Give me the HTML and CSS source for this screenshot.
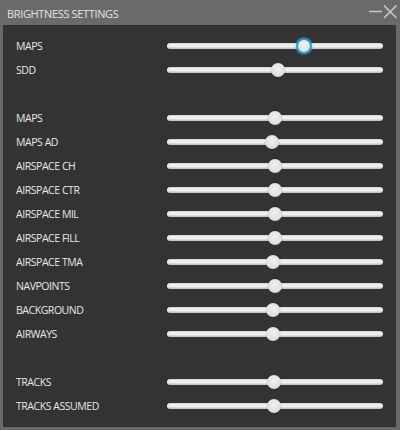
FILE: index.html
```html
<!DOCTYPE html>
<html>
<head>
<meta charset="utf-8">
<link rel="stylesheet" href="styles.css">
</head>
<body>
<div class="window">
  <div class="titlebar">
    <span class="title">BRIGHTNESS SETTINGS</span>
    <svg class="controls" width="30" height="14" viewBox="0 0 30 14">
      <line x1="1" y1="6.5" x2="14" y2="6.5" stroke="#c4c4c4" stroke-width="1.6"/>
      <line x1="16" y1="0.5" x2="28.5" y2="13" stroke="#c4c4c4" stroke-width="1.7"/>
      <line x1="28.5" y1="0.5" x2="16" y2="13" stroke="#c4c4c4" stroke-width="1.7"/>
    </svg>
  </div>
  <div class="content">
    <div class="row"><span class="label">MAPS</span><div class="track"><div class="thumb active" style="left:63.4%"></div></div></div>
    <div class="row"><span class="label">SDD</span><div class="track"><div class="thumb" style="left:51.4%"></div></div></div>
    <div class="spacer"></div>
    <div class="row"><span class="label">MAPS</span><div class="track"><div class="thumb" style="left:50%"></div></div></div>
    <div class="row"><span class="label">MAPS AD</span><div class="track"><div class="thumb" style="left:48.6%"></div></div></div>
    <div class="row"><span class="label">AIRSPACE CH</span><div class="track"><div class="thumb" style="left:50%"></div></div></div>
    <div class="row"><span class="label">AIRSPACE CTR</span><div class="track"><div class="thumb" style="left:50%"></div></div></div>
    <div class="row"><span class="label">AIRSPACE MIL</span><div class="track"><div class="thumb" style="left:50%"></div></div></div>
    <div class="row"><span class="label">AIRSPACE FILL</span><div class="track"><div class="thumb" style="left:50%"></div></div></div>
    <div class="row"><span class="label">AIRSPACE TMA</span><div class="track"><div class="thumb" style="left:49.1%"></div></div></div>
    <div class="row"><span class="label">NAVPOINTS</span><div class="track"><div class="thumb" style="left:50%"></div></div></div>
    <div class="row"><span class="label">BACKGROUND</span><div class="track"><div class="thumb" style="left:49.1%"></div></div></div>
    <div class="row"><span class="label">AIRWAYS</span><div class="track"><div class="thumb" style="left:49.1%"></div></div></div>
    <div class="spacer"></div>
    <div class="row"><span class="label">TRACKS</span><div class="track"><div class="thumb" style="left:49.5%"></div></div></div>
    <div class="row"><span class="label">TRACKS ASSUMED</span><div class="track"><div class="thumb" style="left:49.5%"></div></div></div>
  </div>
</div>
</body>
</html>
```
FILE: styles.css
```css
html, body {
  margin: 0;
  padding: 0;
  background: #6a6a6a;
}
.window {
  width: 400px;
  height: 430px;
  box-sizing: border-box;
  background: #6a6a6a;
  padding: 0 4px 3px 3px;
  display: flex;
  flex-direction: column;
  font-family: "Open Sans", "Noto Sans", sans-serif;
}
.titlebar {
  height: 25px;
  display: flex;
  align-items: center;
  justify-content: space-between;
  flex-shrink: 0;
}
.title {
  color: #e4e4e4;
  font-size: 11px;
  padding-left: 4px;
  padding-top: 1px;
  letter-spacing: -0.35px;
}
.controls {
  margin-right: -2px;
  margin-top: -1px;
}
.content {
  flex: 1;
  background: #333333;
  padding: 9px 13px 9px 13px;
  display: flex;
  flex-direction: column;
}
.row {
  height: 24px;
  display: flex;
  align-items: center;
}
.spacer {
  height: 24px;
}
.label {
  width: 151px;
  color: #e8e8e8;
  font-size: 10.5px;
  letter-spacing: -0.45px;
}
.track {
  position: relative;
  width: 216px;
  height: 6px;
  border-radius: 3px;
  background: linear-gradient(to bottom, #d0d0d0 0%, #f4f4f4 30%, #ececec 60%, #bdbdbd 100%);
}
.thumb {
  position: absolute;
  top: 50%;
  width: 14px;
  height: 14px;
  border-radius: 50%;
  transform: translate(-50%, -50%);
  box-sizing: border-box;
  background: radial-gradient(circle at 50% 40%, #f0f0f0 0%, #e2e2e2 55%, #c8c8c8 100%);
  box-shadow: 0 0 1px rgba(0,0,0,0.5);
}
.thumb.active {
  width: 16px;
  height: 16px;
  border: 2px solid #1e9fdb;
  background: radial-gradient(circle at 50% 40%, #f2f2f2 0%, #e4e4e4 60%, #d0d0d0 100%);
  box-shadow: 0 0 2px #4fc0f0;
}
```
